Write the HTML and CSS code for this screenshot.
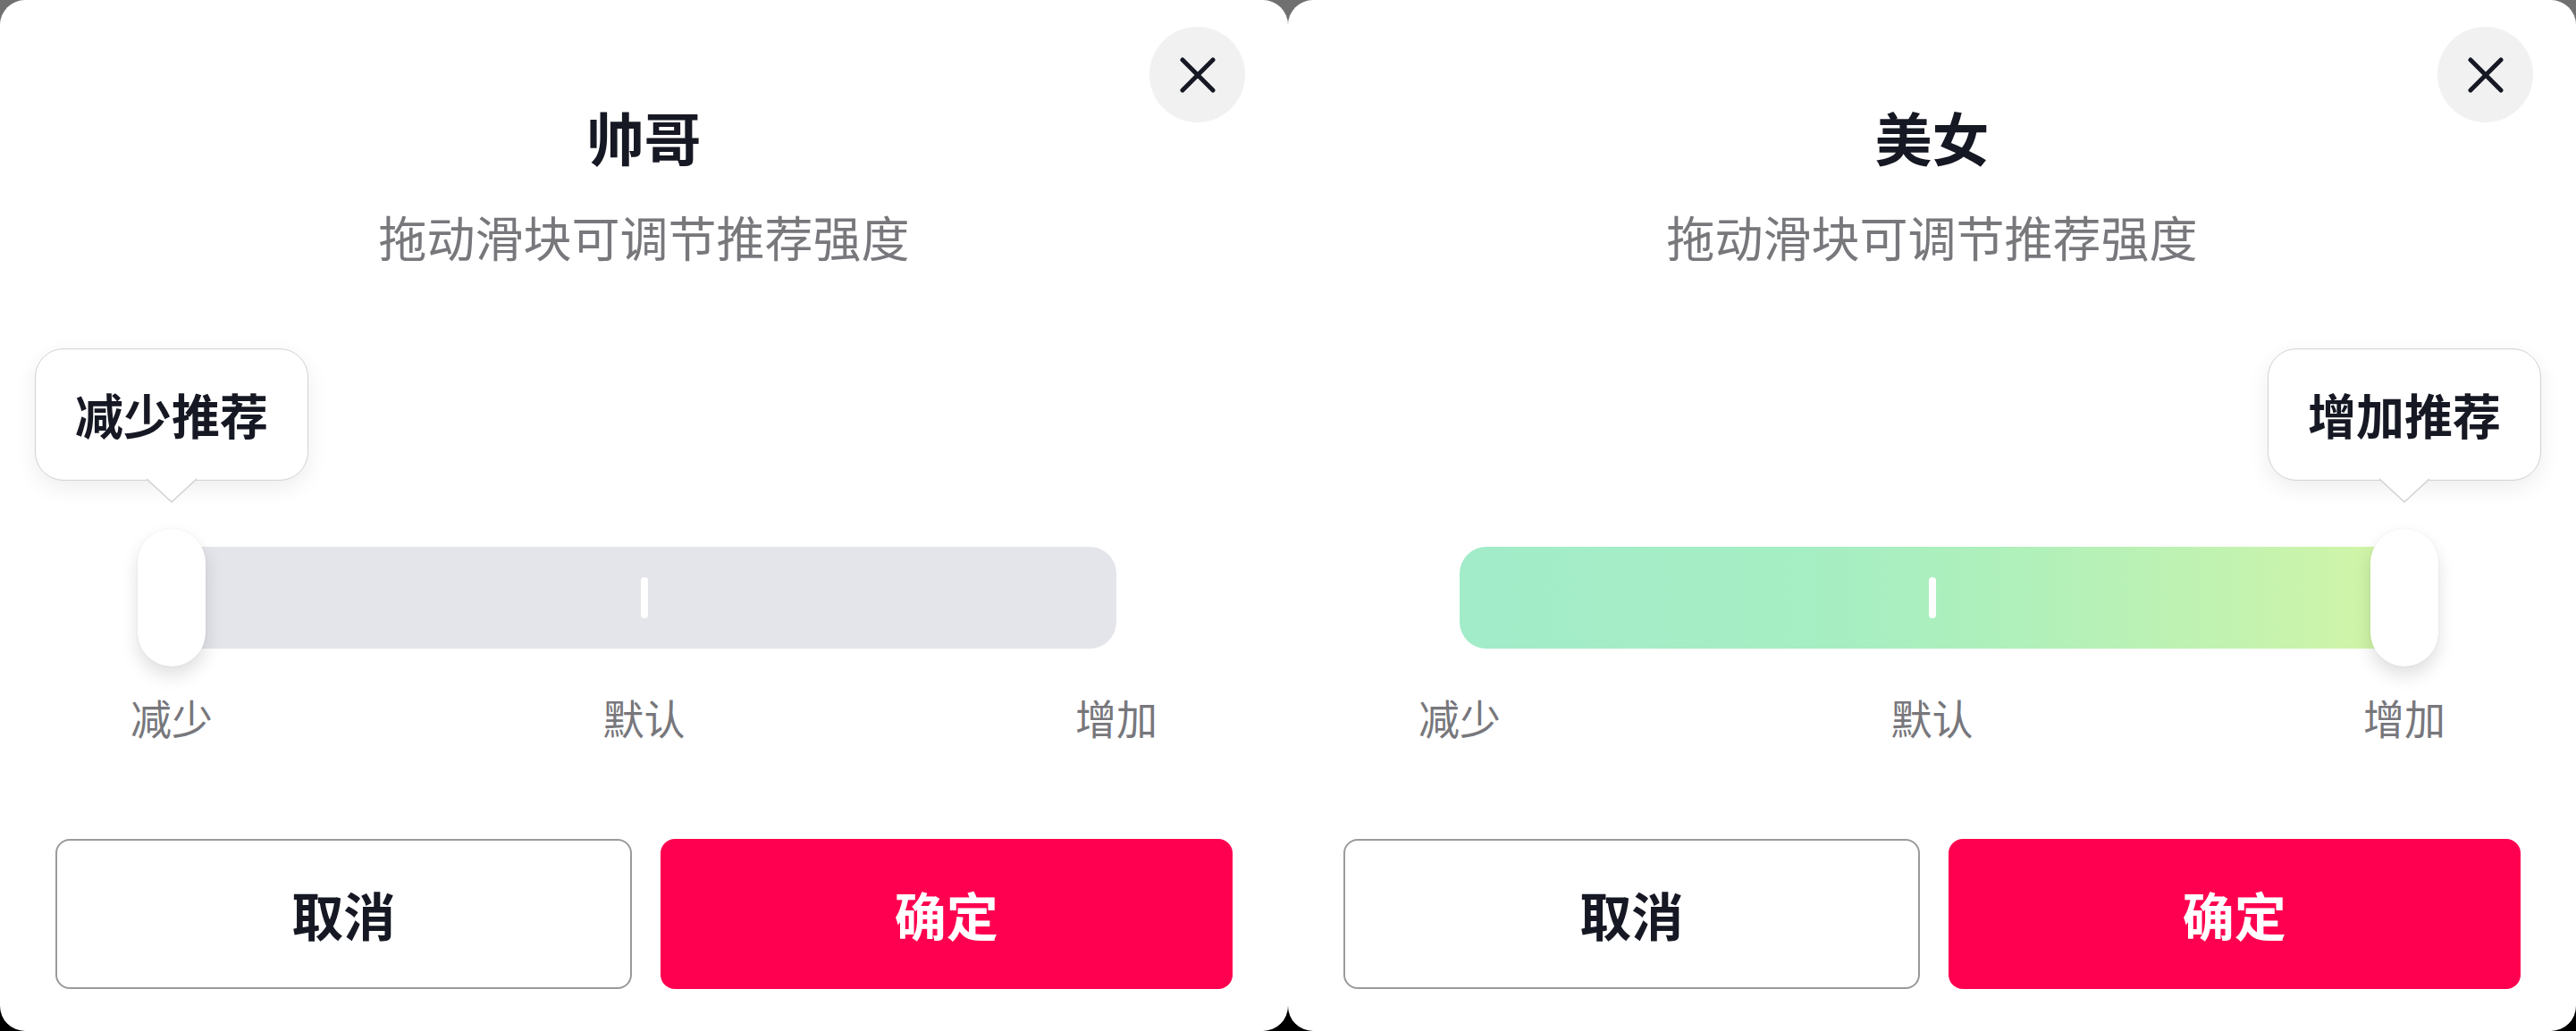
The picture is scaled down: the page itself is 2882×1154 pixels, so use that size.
FILE: index.html
```html
<!DOCTYPE html>
<html lang="zh-CN">
<head>
<meta charset="utf-8">
<title>推荐强度</title>
<link rel="stylesheet" href="styles.css">
</head>
<body>
<div class="screen">
  <section class="sheet">
    <button class="close" aria-label="关闭">
      <svg viewBox="0 0 40 40" width="40" height="40"><path d="M3 3 L37 37 M37 3 L3 37" stroke="#161823" stroke-width="5" stroke-linecap="round" fill="none"/></svg>
    </button>
    <h1 class="title">帅哥</h1>
    <p class="subtitle">拖动滑块可调节推荐强度</p>
    <div class="slider">
      <div class="track track-empty">
        <span class="tick"></span>
        <div class="thumb thumb-start">
          <div class="tip">
            <span class="tip-text">减少推荐</span>
            <svg class="tip-arrow" viewBox="0 0 56 30" width="56" height="30"><path d="M0 2 L28 28 L56 2 Z" fill="#fff"/><path d="M0 2 L28 28 L56 2" fill="none" stroke="#d2d2d4" stroke-width="1.6"/></svg>
          </div>
        </div>
      </div>
      <div class="labels">
        <span>减少</span><span>默认</span><span>增加</span>
      </div>
    </div>
    <div class="actions">
      <button class="btn btn-cancel">取消</button>
      <button class="btn btn-ok">确定</button>
    </div>
  </section>

  <section class="sheet">
    <button class="close" aria-label="关闭">
      <svg viewBox="0 0 40 40" width="40" height="40"><path d="M3 3 L37 37 M37 3 L3 37" stroke="#161823" stroke-width="5" stroke-linecap="round" fill="none"/></svg>
    </button>
    <h1 class="title">美女</h1>
    <p class="subtitle">拖动滑块可调节推荐强度</p>
    <div class="slider">
      <div class="track track-full">
        <span class="tick"></span>
        <div class="thumb thumb-end">
          <div class="tip">
            <span class="tip-text">增加推荐</span>
            <svg class="tip-arrow" viewBox="0 0 56 30" width="56" height="30"><path d="M0 2 L28 28 L56 2 Z" fill="#fff"/><path d="M0 2 L28 28 L56 2" fill="none" stroke="#d2d2d4" stroke-width="1.6"/></svg>
          </div>
        </div>
      </div>
      <div class="labels">
        <span>减少</span><span>默认</span><span>增加</span>
      </div>
    </div>
    <div class="actions">
      <button class="btn btn-cancel">取消</button>
      <button class="btn btn-ok">确定</button>
    </div>
  </section>
</div>
</body>
</html>
```
FILE: styles.css
```css
* { box-sizing: border-box; }

html, body {
  margin: 0;
  padding: 0;
}

body {
  width: 2882px;
  height: 1154px;
  overflow: hidden;
  font-family: "Noto Sans CJK SC", "Noto Sans", sans-serif;
  color: #161823;
}

.screen {
  display: flex;
  width: 2882px;
  height: 1154px;
  background: linear-gradient(to bottom, #707070 0, #707070 50%, #000 50%, #000 100%);
}

.sheet {
  position: relative;
  flex: 0 0 1441px;
  height: 1154px;
  background: #fff;
  border-radius: 28px;
  display: flex;
  flex-direction: column;
  align-items: center;
  padding-bottom: 47px;
}

.close {
  position: absolute;
  top: 30px;
  right: 48px;
  width: 107px;
  height: 107px;
  border: none;
  border-radius: 50%;
  background: #f1f1f2;
  padding: 0;
  display: flex;
  align-items: center;
  justify-content: center;
}

.close svg {
  width: 40px;
  height: 40px;
}

.title {
  margin: 108px 0 0;
  font-size: 64px;
  line-height: 88px;
  font-weight: 700;
  color: #161823;
}

.subtitle {
  margin: 29px 0 0;
  font-size: 54px;
  line-height: 80px;
  font-weight: 400;
  color: #77777c;
}

.slider {
  width: 1057px;
  margin-top: 307px;
}

.track {
  position: relative;
  height: 114px;
  border-radius: 30px;
}

.track-empty {
  background: #e4e5ea;
}

.track-full {
  background: linear-gradient(90deg, #a2ecca 0%, #a6eec2 40%, #aff0bb 58%, #bff2b2 78%, #d3f5a6 100%);
}

.tick {
  position: absolute;
  left: 50%;
  top: 34px;
  width: 8px;
  height: 46px;
  margin-left: -4px;
  border-radius: 4px;
  background: #fff;
}

.thumb {
  position: absolute;
  top: -20px;
  width: 76px;
  height: 154px;
  margin-left: -38px;
  border-radius: 38px;
  background: #fff;
  box-shadow: 0 10px 20px rgba(0, 0, 0, 0.13), 0 0 3px rgba(0, 0, 0, 0.05);
}

.thumb-start { left: 0; }
.thumb-end { left: 100%; }

.tip {
  position: absolute;
  bottom: calc(100% + 54px);
  left: 50%;
  transform: translateX(-50%);
  height: 148px;
  padding: 0 44px;
  display: flex;
  align-items: center;
  background: #fff;
  border: 1.6px solid #d2d2d4;
  border-radius: 32px;
  box-shadow: 0 8px 24px rgba(0, 0, 0, 0.07);
  white-space: nowrap;
}

.tip-text {
  font-size: 54px;
  line-height: 70px;
  font-weight: 700;
  color: #161823;
}

.tip-arrow {
  position: absolute;
  left: 50%;
  top: calc(100% - 3px);
  margin-left: -28px;
  display: block;
}

.labels {
  display: flex;
  justify-content: space-between;
  margin: 44px -60px 0;
}

.labels span {
  width: 120px;
  text-align: center;
  font-size: 46px;
  line-height: 64px;
  color: #77777c;
}

.actions {
  margin-top: auto;
  width: 100%;
  padding: 0 62px;
  display: flex;
  gap: 32px;
}

.btn {
  flex: 1 1 0;
  min-width: 0;
  height: 168px;
  border-radius: 16px;
  font-family: "Noto Sans CJK SC", "Noto Sans", sans-serif;
  font-size: 58px;
  font-weight: 700;
  padding: 0;
}

.btn-cancel {
  background: #fff;
  border: 2px solid #9a9a9c;
  color: #161823;
}

.btn-ok {
  background: #ff0050;
  border: none;
  color: #fff;
}
```
